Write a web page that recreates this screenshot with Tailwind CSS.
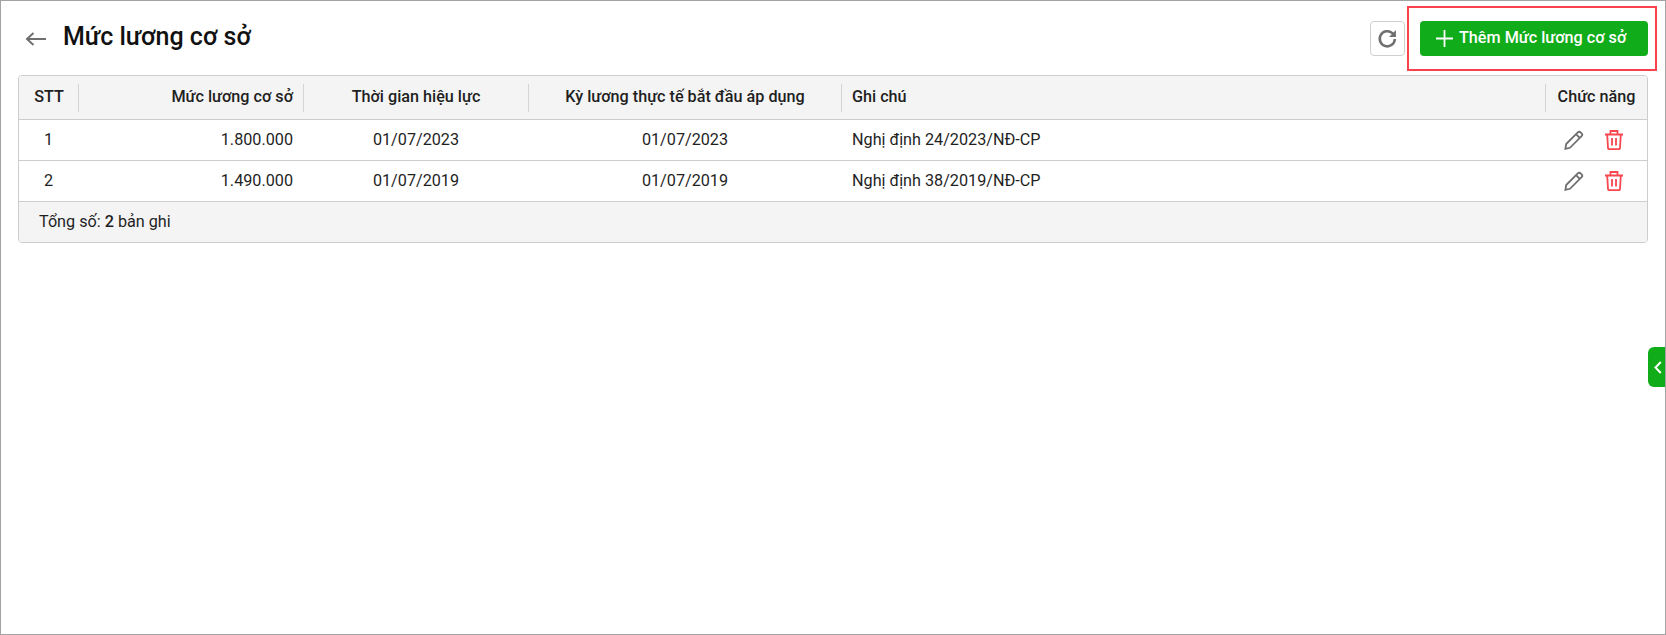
<!DOCTYPE html>
<html lang="vi">
<head>
  <meta charset="UTF-8" />
  <title>Mức lương cơ sở</title>
  <script src="https://cdn.jsdelivr.net/npm/@tailwindcss/browser@4"></script>
</head>
<body class="bg-white font-['Roboto',sans-serif] text-[16.2px] text-[#1f1f1f]">
  <div class="relative h-[635px] w-[1666px] overflow-hidden border border-[#a3a3a3] pl-[17px] pr-[17px]">

    <!-- header -->
    <div class="flex h-[74px] items-center justify-between">
      <div class="flex items-center pb-[3px]">
        <svg class="ml-[7px] mr-[17px] mt-[4px]" width="21" height="14" viewBox="0 0 21 14" fill="none" stroke="#6f6f6f" stroke-width="2"><path d="M21 7H2M8.500 1 2 7l6.500 6"/></svg>
        <h1 class="text-[25px] font-medium leading-none text-[#111]">Mức lương cơ sở</h1>
      </div>
      <div class="flex items-center gap-[15px]">
        <button class="flex h-[35px] w-[35px] items-center justify-center rounded-[4px] border border-[#cfcfcf] bg-white">
          <svg width="21" height="21" viewBox="0 0 20 20" fill="none" stroke="#6f6f6f" stroke-width="2.400"><path d="M17 10.500a7.200 7.200 0 1 1-2.400-5.600L17 7.200"/><path d="M18 2v6.500h-6.500z" fill="#6f6f6f" stroke="none"/></svg>
        </button>
        <button class="flex h-[35px] w-[228px] items-center justify-start gap-[6px] rounded-[4px] bg-[#10ac19] pl-[16px] text-[16.2px] font-medium text-white">
          <svg width="17" height="17" viewBox="0 0 17 17" stroke="white" stroke-width="1.800"><path d="M8.500 0v17M0 8.500h17"/></svg>
          Thêm Mức lương cơ sở
        </button>
      </div>
    </div>

    <!-- table -->
    <div class="overflow-hidden rounded-[4px] border border-[#cdcdcd]">
      <div class="grid h-[44px] grid-cols-[60px_225px_225px_313px_704px_1fr] items-center border-b border-[#cdcdcd] bg-[#f4f4f4] font-medium">
        <div class="flex h-[28px] items-center justify-center border-r border-[#d4d4d4] pl-[1px]">STT</div>
        <div class="flex h-[28px] items-center justify-end border-r border-[#d4d4d4] pr-[10px]">Mức lương cơ sở</div>
        <div class="flex h-[28px] items-center justify-center border-r border-[#d4d4d4]">Thời gian hiệu lực</div>
        <div class="flex h-[28px] items-center justify-center border-r border-[#d4d4d4]">Kỳ lương thực tế bắt đầu áp dụng</div>
        <div class="flex h-[28px] items-center border-r border-[#d4d4d4] pl-[10px]">Ghi chú</div>
        <div class="flex h-[28px] items-center justify-center">Chức năng</div>
      </div>

      <div class="grid h-[41px] grid-cols-[60px_225px_225px_313px_704px_1fr] items-center border-b border-[#cdcdcd]">
        <div class="pr-[1px] text-center">1</div>
        <div class="pr-[11px] text-right">1.800.000</div>
        <div class="pr-[1px] text-center">01/07/2023</div>
        <div class="pr-[1px] text-center">01/07/2023</div>
        <div class="pl-[10px]">Nghị định 24/2023/NĐ-CP</div>
        <div class="flex items-center justify-end gap-[21px] pr-[24px]">
          <svg width="20" height="20" viewBox="0 0 20 20" fill="none" stroke="#6f6f6f" stroke-width="1.800"><path d="M2.200 14 13.800 2.400a2 2 0 0 1 2.800 0l1 1a2 2 0 0 1 0 2.800L6 17.800l-4.600 1zM12 4.200l3.800 3.800"/></svg>
          <svg width="18" height="20" viewBox="0 0 18 20" fill="none" stroke="#f8474f" stroke-width="1.800"><path d="M0 4.500h18M5.500 4.500V1h7v3.500M2.200 4.500l.8 13.500a1.500 1.500 0 0 0 1.500 1.200h9a1.500 1.500 0 0 0 1.500-1.200l.8-13.500M7 8v7.500M11 8v7.500"/></svg>
        </div>
      </div>

      <div class="grid h-[41px] grid-cols-[60px_225px_225px_313px_704px_1fr] items-center border-b border-[#cdcdcd]">
        <div class="pr-[1px] text-center">2</div>
        <div class="pr-[11px] text-right">1.490.000</div>
        <div class="pr-[1px] text-center">01/07/2019</div>
        <div class="pr-[1px] text-center">01/07/2019</div>
        <div class="pl-[10px]">Nghị định 38/2019/NĐ-CP</div>
        <div class="flex items-center justify-end gap-[21px] pr-[24px]">
          <svg width="20" height="20" viewBox="0 0 20 20" fill="none" stroke="#6f6f6f" stroke-width="1.800"><path d="M2.200 14 13.800 2.400a2 2 0 0 1 2.800 0l1 1a2 2 0 0 1 0 2.800L6 17.800l-4.600 1zM12 4.200l3.800 3.800"/></svg>
          <svg width="18" height="20" viewBox="0 0 18 20" fill="none" stroke="#f8474f" stroke-width="1.800"><path d="M0 4.500h18M5.500 4.500V1h7v3.500M2.200 4.500l.8 13.500a1.500 1.500 0 0 0 1.500 1.200h9a1.500 1.500 0 0 0 1.500-1.200l.8-13.500M7 8v7.500M11 8v7.500"/></svg>
        </div>
      </div>

      <div class="flex h-[40px] items-center bg-[#f4f4f4] pl-[20px]">
        <span>Tổng số: <b class="font-medium">2</b> bản ghi</span>
      </div>
    </div>

    <!-- annotation box round the add button -->
    <div class="absolute left-[1406px] top-[5px] h-[65px] w-[250px] border-2 border-[#f8414b]"></div>

    <!-- side panel toggle -->
    <div class="absolute right-0 top-[346px] flex h-[40px] w-[17px] items-center justify-center rounded-l-[6px] bg-[#10ac19] pl-[3px]">
      <svg width="8" height="13" viewBox="0 0 8 13" fill="none" stroke="white" stroke-width="2"><path d="M6.800 1 1.500 6.500l5.300 5.500"/></svg>
    </div>
  </div>
</body>
</html>
